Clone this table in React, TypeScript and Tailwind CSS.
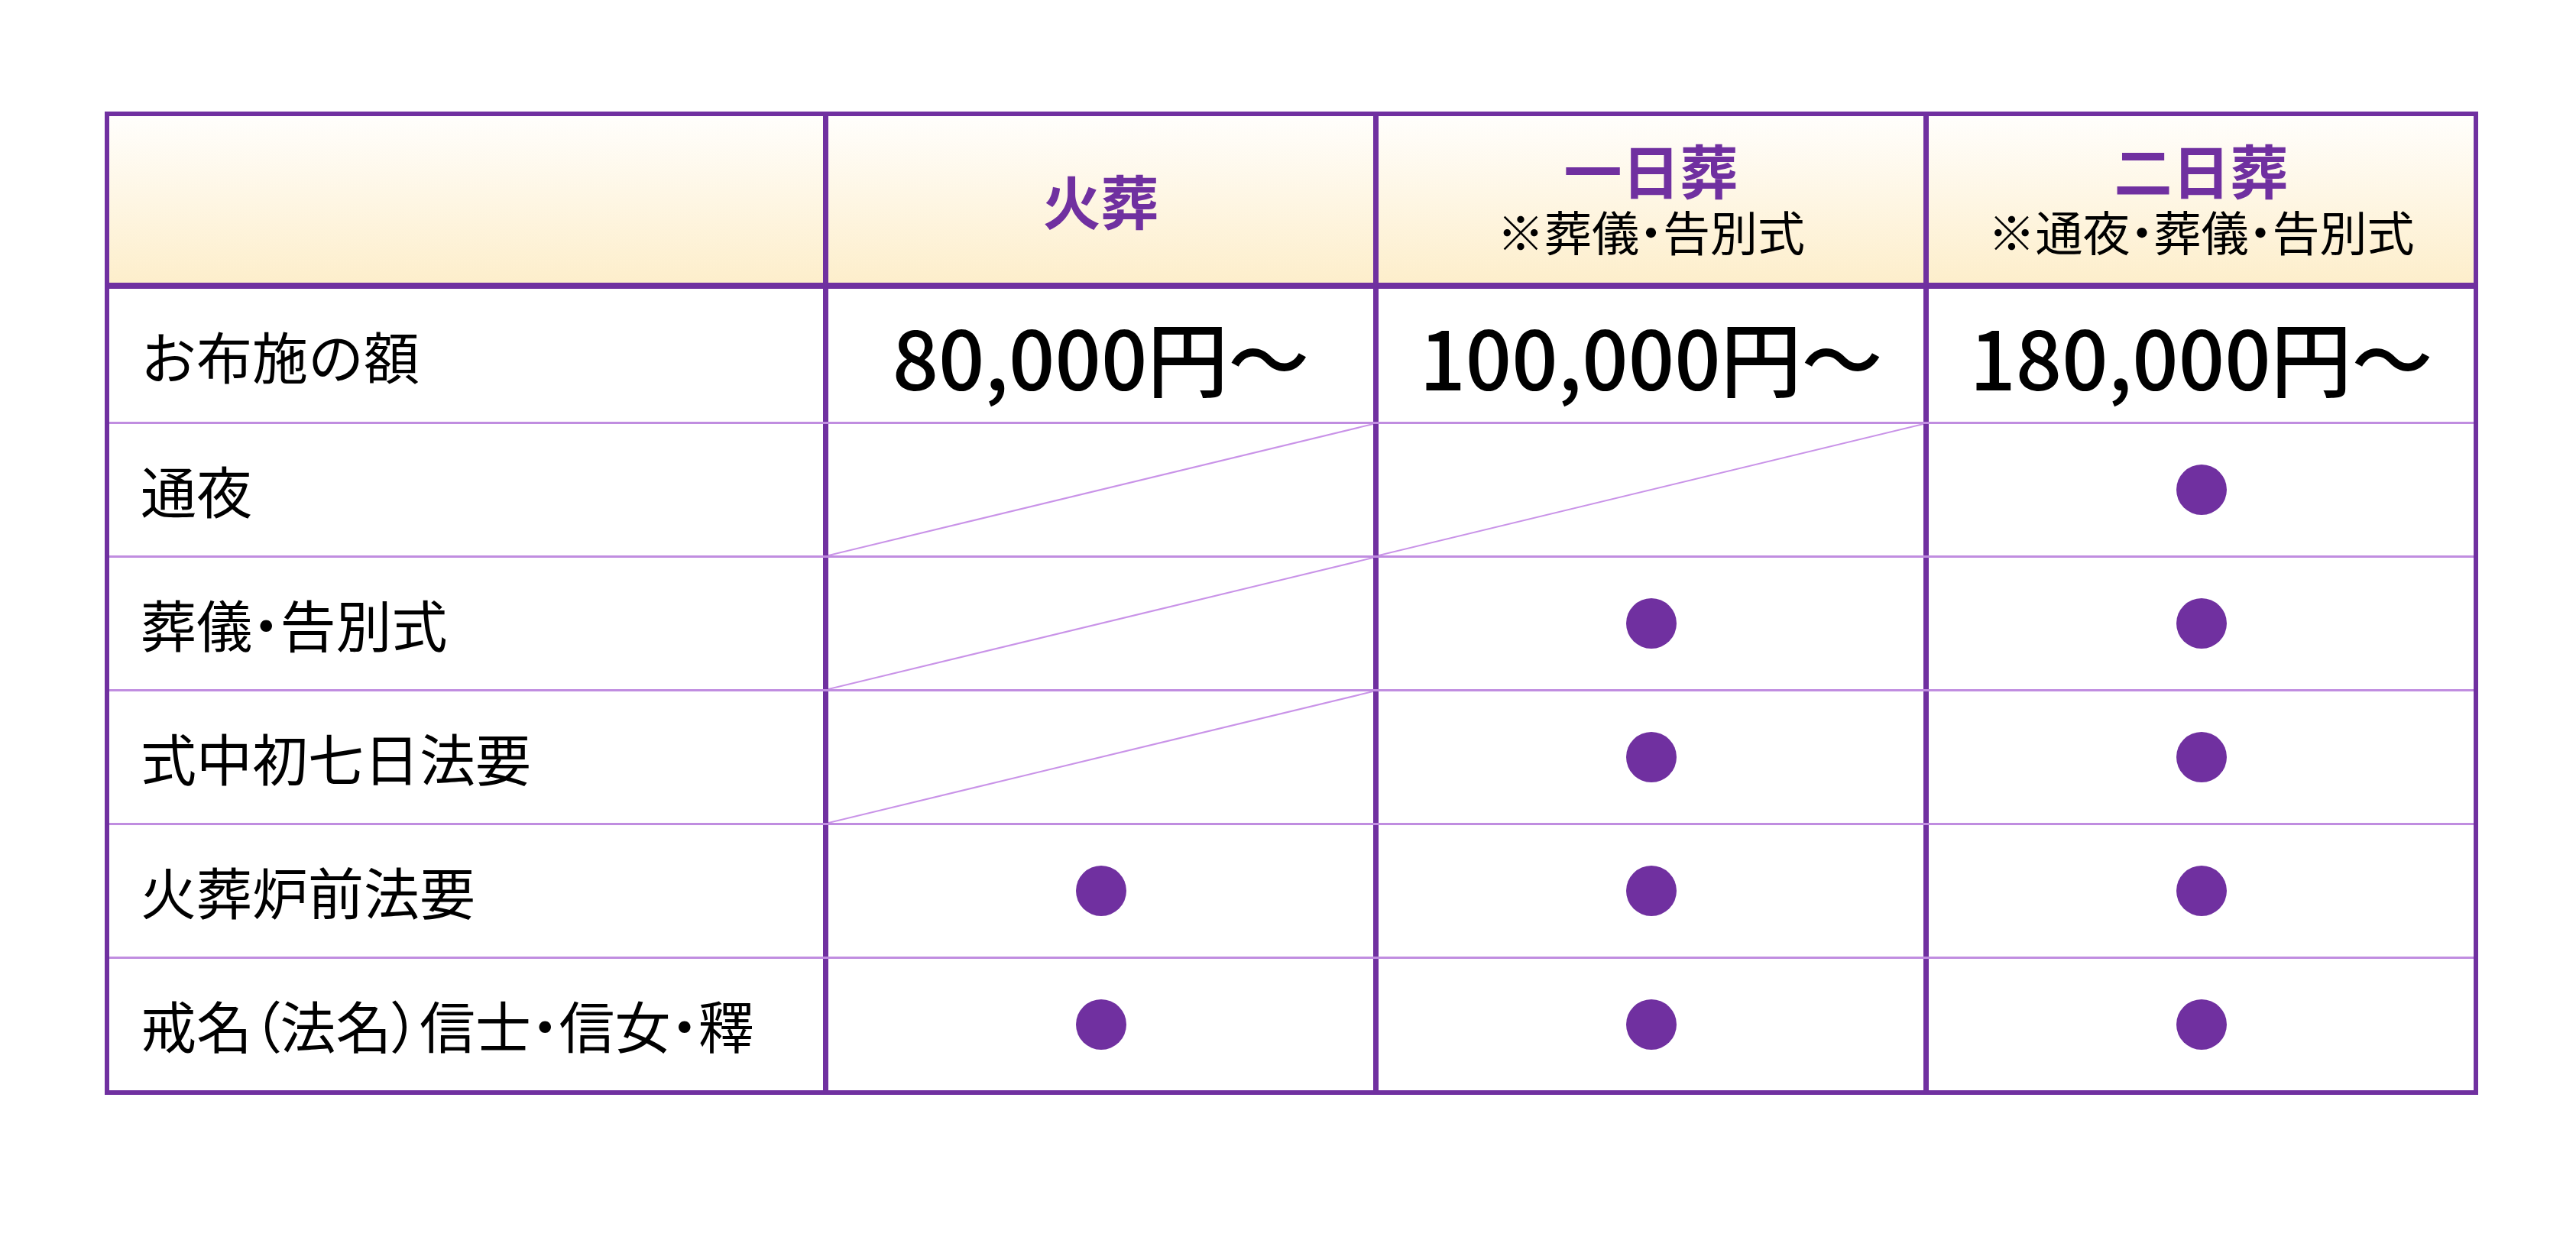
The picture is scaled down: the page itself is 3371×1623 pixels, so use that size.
import React from 'react';

type Mark = 'dot' | 'none' | 'slash';

interface Plan {
  name: string;
  note?: string;
  price: string;
}

const plans: Plan[] = [
  { name: '火葬', price: '80,000円～' },
  { name: '一日葬', note: '※葬儀・告別式', price: '100,000円～' },
  { name: '二日葬', note: '※通夜・葬儀・告別式', price: '180,000円～' },
];

const rows: { label: string; marks: Mark[] }[] = [
  { label: '通夜', marks: ['slash', 'slash', 'dot'] },
  { label: '葬儀・告別式', marks: ['slash', 'dot', 'dot'] },
  { label: '式中初七日法要', marks: ['slash', 'dot', 'dot'] },
  { label: '火葬炉前法要', marks: ['dot', 'dot', 'dot'] },
  { label: '戒名（法名）信士・信女・釋', marks: ['dot', 'dot', 'dot'] },
];

const font = "font-['Noto_Sans_CJK_JP','Noto_Sans',sans-serif]";

const Slash = () => (
  <svg className="absolute inset-0 h-full w-full" preserveAspectRatio="none" viewBox="0 0 100 100">
    <line x1="0" y1="100" x2="100" y2="0" stroke="#c993e8" strokeWidth="2" vectorEffect="non-scaling-stroke" />
  </svg>
);

const Cell = ({ mark }: { mark: Mark }) => (
  <div className="relative flex items-center justify-center border-l-[7px] border-[#7030a0]">
    {mark === 'slash' && <Slash />}
    {mark === 'dot' && <span className="h-[66px] w-[66px] rounded-full bg-[#7030a0]" />}
  </div>
);

export default function App() {
  return (
    <div className={`min-h-screen bg-white pl-[137px] pt-[146px] ${font}`}>
      <div className="w-[3106px] border-[6px] border-[#7030a0] text-black">
        {/* header */}
        <div className="grid h-[226px] grid-cols-[934px_1fr_1fr_1fr] border-b-[8px] border-[#7030a0] bg-linear-to-b from-[#fffefc] to-[#fdeecb]">
          <div />
          {plans.map((p) => (
            <div key={p.name} className="flex flex-col items-center justify-center border-l-[7px] border-[#7030a0]">
              <div className="text-[76px] font-bold leading-[82px] text-[#7030a0]">{p.name}</div>
              {p.note && (
                <div className="text-[62px] leading-[80px] [font-feature-settings:'palt']">{p.note}</div>
              )}
            </div>
          ))}
        </div>

        {/* price row */}
        <div className="grid h-[174px] grid-cols-[934px_1fr_1fr_1fr]">
          <div className="flex items-center pl-[41px] text-[73px]">お布施の額</div>
          {plans.map((p) => (
            <div key={p.name} className="flex items-center justify-center border-l-[7px] border-[#7030a0] text-[106px] font-medium">
              {p.price}
            </div>
          ))}
        </div>

        {rows.map((r) => (
          <div key={r.label} className="grid h-[175px] grid-cols-[934px_1fr_1fr_1fr] border-t-[3px] border-[#c08de0]">
            <div className="flex items-center pl-[41px] text-[73px] [font-feature-settings:'palt']">{r.label}</div>
            {r.marks.map((m, i) => (
              <Cell key={i} mark={m} />
            ))}
          </div>
        ))}
      </div>
    </div>
  );
}
